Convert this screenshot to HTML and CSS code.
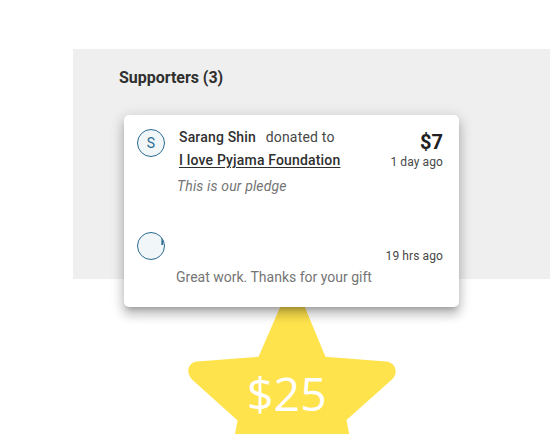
FILE: index.html
```html
<!doctype html>
<html lang="en">
<head>
<meta charset="utf-8">
<title>Supporters</title>
<link rel="stylesheet" href="styles.css">
</head>

<body>

<!-- supporters -->
<section class="supporters">
  <h2>Supporters (3)</h2>

  <div class="card">
    <article class="donation">
      <div class="avatar">S</div>
      <div class="info">
        <p class="who"><strong>Sarang Shin</strong> <span class="action">donated to</span></p>
        <p class="cause"><a href="#">I love Pyjama Foundation</a></p>
        <p class="message pledge">This is our pledge</p>
      </div>
      <div class="meta">
        <div class="amount">$7</div>
        <div class="time">1 day ago</div>
      </div>
    </article>

    <article class="donation second">
      <div class="avatar">
        <svg width="26" height="26" viewBox="0 0 26 26"><path d="M24.2 5v7" stroke="#2a6a92" stroke-width="1.6"/></svg>
      </div>
      <div class="info">
        <p class="message">Great work. Thanks for your gift</p>
      </div>
      <div class="meta">
        <div class="time">19 hrs ago</div>
      </div>
    </article>
  </div>
</section>

<!-- donation star -->
<div class="star">
  <svg width="208" height="155" viewBox="188 279 208 155">
    <path fill="#ffe34d" d="M280.2 307 Q292.5 284 304.8 307 L325.5 356.7 L386 361.5 C395 362 399 372 392.5 379 L346.5 420 L349.2 434 H235 L237.6 420.5 L192 379.5 C185 372 188.5 362.3 197 361.5 L258.5 356.7 Z"/>
    <text x="247" y="411">$25</text>
  </svg>
</div>

</body>
</html>
```
FILE: styles.css
```css
:root {
  --panel: #efefef;
  --txt: #303030;
  --muted: #757575;
  --blue: #2a6a92;
}

* {
  box-sizing: border-box;
  margin: 0;
  padding: 0;
}
body {
  font-family: Roboto, sans-serif;
  font-size: 14px;
  color: var(--txt);
  background: #fff;
  height: 434px;
  padding-top: 49px;
  overflow: hidden;
}

/* supporters panel */
.supporters {
  position: relative;
  z-index: 1;
  height: 230px;
  margin-left: 73px;
  padding: 18px 46px 0;
  background: var(--panel);
}
.supporters h2 {
  font-size: 16px;
  line-height: 22px;
  font-weight: 700;
  letter-spacing: -.03px;
}

/* donation card */
.card {
  width: 335px;
  height: 192px;
  margin: 26px 0 0 5px;
  padding: 0 16px 0 13px;
  background: #fff;
  border-radius: 5px;
  box-shadow: 0 5px 5px -3px rgba(0,0,0,.2), 0 8px 10px 1px rgba(0,0,0,.14), 0 3px 14px 2px rgba(0,0,0,.14);
}
.donation {
  display: flex;
  height: 114px;
  padding-top: 13px;
}
.avatar {
  flex: none;
  width: 28px;
  height: 28px;
  margin-top: 1px;
  border: 1px solid var(--blue);
  border-radius: 50%;
  background: #f1f7f8;
  color: var(--blue);
  line-height: 27px;
  text-align: center;
  overflow: hidden;
}
.avatar svg {
  display: block;
}
.info {
  flex: 1;
  margin-top: -1px;
  padding-left: 14px;
  white-space: nowrap;
}
.who,
.cause {
  line-height: 20px;
  letter-spacing: .17px;
}
.who strong,
.cause a {
  font-weight: 500;
}
.who .action {
  margin-left: 6px;
  letter-spacing: .2px;
  color: #484848;
}
.cause {
  margin-top: 3px;
}
.cause a {
  color: inherit;
  text-underline-offset: 2px;
}
.message {
  line-height: 20px;
  color: var(--muted);
}
.pledge {
  margin: 6px 0 0 -2px;
  font-style: italic;
  letter-spacing: .15px;
}
.meta {
  text-align: right;
}
.amount {
  font-size: 20px;
  line-height: 28px;
  font-weight: 700;
  color: #202020;
}
.time {
  margin-top: -1px;
  font-size: 12px;
  line-height: 14px;
  letter-spacing: .1px;
  color: #484848;
}

/* second row has no name or amount */
.second {
  height: 78px;
  padding-top: 2px;
}
.second .info {
  padding: 37px 0 0 11px;
}
.second .time {
  margin-top: 18px;
}

/* star */
.star {
  margin-left: 188px;
}
.star svg {
  display: block;
}
.star text {
  font-family: "Open Sans", sans-serif;
  font-size: 46.5px;
  font-weight: 400;
  fill: #fff;
}
```
